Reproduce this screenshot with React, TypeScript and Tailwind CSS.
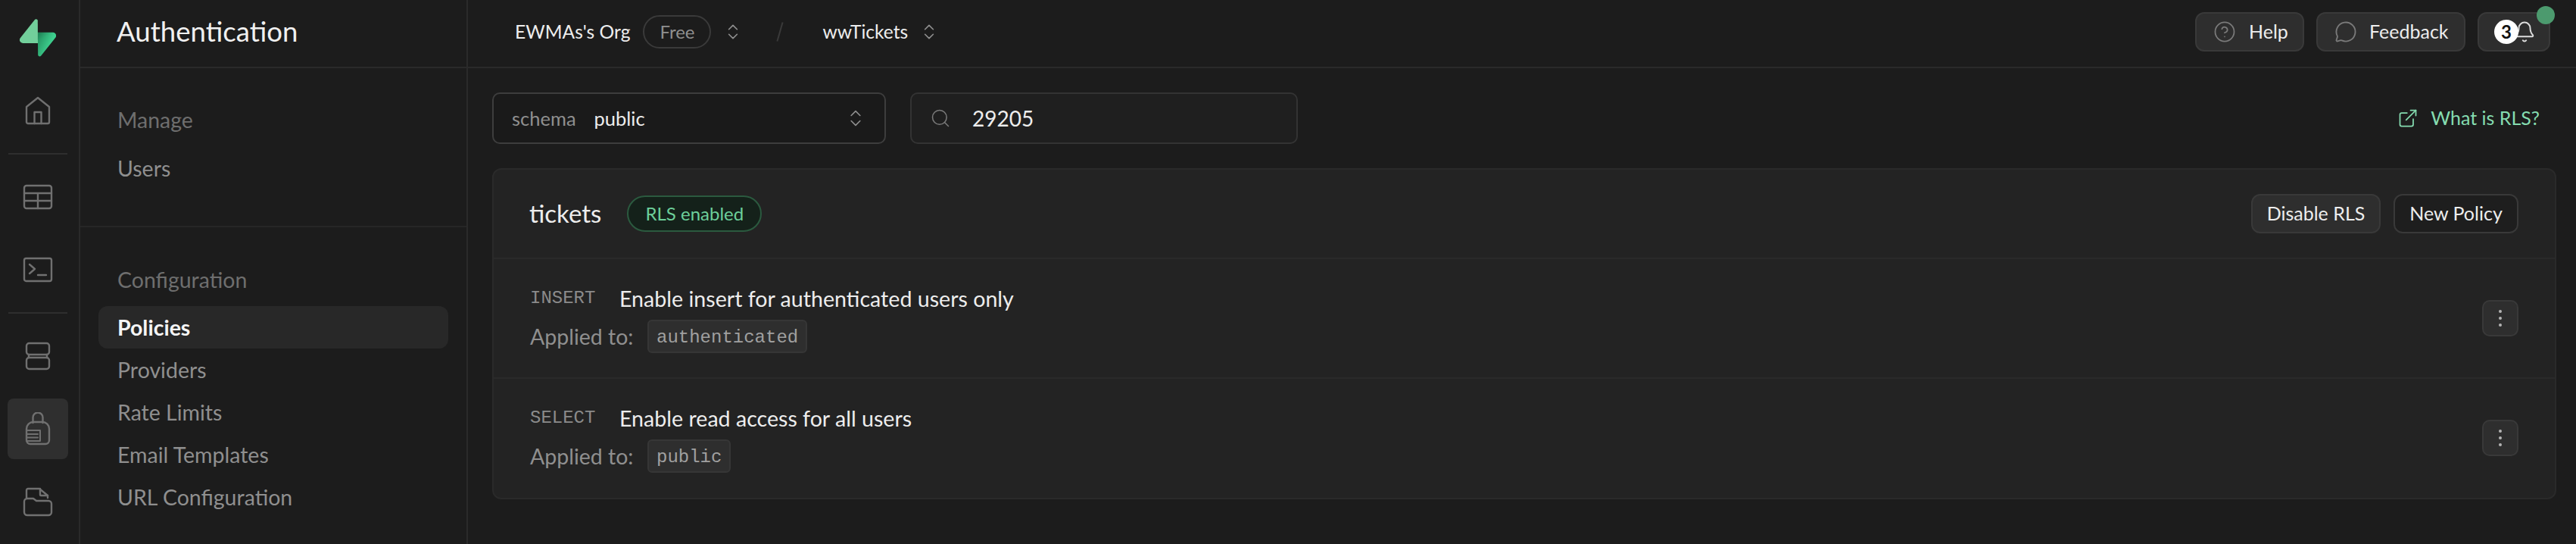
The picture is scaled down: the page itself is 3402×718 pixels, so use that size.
import { Search, ChevronsUpDown, CircleHelp, MessageCircle, Bell, ExternalLink } from 'lucide-react';

function Logo() {
  return (
    <svg width="48" height="50" viewBox="0 0 109 113" fill="none">
      <path d="M63.7 110.3c-2.9 3.6-8.7 1.6-8.8-3L54 40h45.5c8.2 0 12.8 9.5 7.7 16L63.7 110.3Z" fill="url(#g1)" />
      <path d="M63.7 110.3c-2.9 3.6-8.7 1.6-8.8-3L54 40h45.5c8.2 0 12.8 9.5 7.7 16L63.7 110.3Z" fill="url(#g2)" fillOpacity="0.2" />
      <path d="M45.3 2c2.9-3.6 8.7-1.6 8.8 3l.4 67.3H9.7c-8.2 0-12.8-9.5-7.7-16L45.3 2Z" fill="#72cf9b" />
      <defs>
        <linearGradient id="g1" x1="54" y1="55" x2="94" y2="72" gradientUnits="userSpaceOnUse">
          <stop stopColor="#249361" />
          <stop offset="1" stopColor="#3ecf8e" />
        </linearGradient>
        <linearGradient id="g2" x1="36" y1="30" x2="54" y2="65" gradientUnits="userSpaceOnUse">
          <stop />
          <stop offset="1" stopOpacity="0" />
        </linearGradient>
      </defs>
    </svg>
  );
}

const rail = { stroke: '#707070', strokeWidth: 2.4, fill: 'none', strokeLinejoin: 'round' as const, strokeLinecap: 'round' as const };

function RailIcon({ name }: { name: string }) {
  return (
    <svg width="40" height="44" viewBox="0 0 40 44" {...rail}>
      {name === 'home' && (
        <>
          <path d="M5 17 20 5l15 12v20a2 2 0 0 1-2 2H7a2 2 0 0 1-2-2V17Z" />
          <path d="M15.5 39V24h9v15" />
        </>
      )}
      {name === 'table' && (
        <>
          <rect x="2" y="7" width="36" height="30" rx="3" />
          <path d="M2 17h36M2 27h36M20 17v20" />
        </>
      )}
      {name === 'terminal' && (
        <>
          <rect x="2" y="7" width="36" height="30" rx="2.5" />
          <path d="m9 15 7 6-7 6M20 29h11" />
        </>
      )}
      {name === 'db' && (
        <>
          <rect x="5" y="5" width="30" height="15" rx="3.5" />
          <rect x="5" y="24" width="30" height="15" rx="3.5" />
          <path d="M8 20v4M32 20v4" />
        </>
      )}
      {name === 'auth' && (
        <>
          <path d="M13.5 15V8a6.5 6.5 0 0 1 13 0v7" transform="translate(0 -1)" />
          <path d="M5 23a9 9 0 0 1 9-9h12a9 9 0 0 1 9 9v15a5 5 0 0 1-5 5H10a5 5 0 0 1-5-5V23Z" transform="translate(0 -1)" />
          <path d="M5 24h18v14H5M5 29h15M5 33.5h15" strokeWidth="2" />
        </>
      )}
      {name === 'storage' && (
        <>
          <path d="M5 17V7a2 2 0 0 1 2-2h15l11 9v3" />
          <path d="M23 5v8a1 1 0 0 0 1 1h9" />
          <path d="M2 22a4 4 0 0 1 4-4h8l4 3h16a4 4 0 0 1 4 4v11a4 4 0 0 1-4 4H6a4 4 0 0 1-4-4V22Z" />
        </>
      )}
    </svg>
  );
}

function RailItem({ name, active }: { name: string; active?: boolean }) {
  return (
    <div className={`flex h-[80px] w-[80px] items-center justify-center rounded-[8px] ${active ? 'bg-[#2f2f2f]' : ''}`}>
      <RailIcon name={name} />
    </div>
  );
}

function NavItem({ label, active }: { label: string; active?: boolean }) {
  return (
    <div className={`flex h-[56px] items-center rounded-[12px] pl-[25px] text-[28.5px] ${active ? 'bg-[#282828] font-bold text-[#f5f5f5]' : 'text-[#8f8f8f]'}`}>
      {label}
    </div>
  );
}

function HeaderButton({ icon, label, className }: { icon: React.ReactNode; label: string; className: string }) {
  return (
    <div className={`flex h-[52px] items-center rounded-[12px] border-2 border-[#393939] bg-[#2e2e2e] text-[25px] text-[#ededed] ${className}`}>
      {icon}
      {label}
    </div>
  );
}

function PolicyRow({ command, name, role, last }: { command: string; name: string; role: string; last?: boolean }) {
  return (
    <div className={`flex items-center justify-between pl-[48px] pr-[48px] pt-[32px] ${last ? 'pb-[33px]' : 'border-b-2 border-[#2a2a2a] pb-[32px]'}`}>
      <div>
        <div className="flex h-[40px] items-center">
          <span className="w-[118px] font-['Liberation_Mono',monospace] text-[24px] text-[#8b8b8b]">{command}</span>
          <span className="text-[28.6px] text-[#ededed]">{name}</span>
        </div>
        <div className="mt-[8px] flex h-[44px] items-center text-[28.5px] text-[#8f8f8f]">
          <span className="w-[155px]">Applied to:</span>
          <span className="flex h-[44px] items-center rounded-[6px] border-2 border-[#363636] bg-[#2e2e2e] px-[10px] pt-[3px] font-['Liberation_Mono',monospace] text-[24px] text-[#a0a0a0]">
            {role}
          </span>
        </div>
      </div>
      <div className="flex h-[48px] w-[48px] flex-col items-center justify-center gap-[5px] rounded-[10px] border-2 border-[#393939] bg-[#2e2e2e]">
        <span className="h-[4px] w-[4px] rounded-full bg-[#b4b4b4]" />
        <span className="h-[4px] w-[4px] rounded-full bg-[#b4b4b4]" />
        <span className="h-[4px] w-[4px] rounded-full bg-[#b4b4b4]" />
      </div>
    </div>
  );
}

export default function App() {
  return (
    <div className="flex h-[718px] w-[3402px] overflow-hidden bg-[#1c1c1c] font-['Lato',sans-serif] text-[#ededed]">
      {/* icon rail */}
      <aside className="flex w-[106px] shrink-0 flex-col items-center border-r-2 border-[#2a2a2a] pr-[4px]">
        <div className="flex h-[106px] w-full shrink-0 items-start justify-center pt-[25px]">
          <Logo />
        </div>
        <RailItem name="home" />
        <div className="my-[16px] h-[2px] w-[78px] shrink-0 bg-[#2e2e2e]" />
        <div className="flex flex-col gap-[16px]">
          <RailItem name="table" />
          <RailItem name="terminal" />
        </div>
        <div className="my-[16px] h-[2px] w-[78px] shrink-0 bg-[#2e2e2e]" />
        <div className="flex flex-col gap-[16px]">
          <RailItem name="db" />
          <RailItem name="auth" active />
          <RailItem name="storage" />
        </div>
      </aside>

      {/* product sidebar */}
      <aside className="w-[512px] shrink-0 border-r-2 border-[#2a2a2a]">
        <div className="flex h-[90px] items-center border-b-2 border-[#2a2a2a] pb-[6px] pl-[48px] text-[36.6px] text-[#f0f0f0]">Authentication</div>
        <div className="border-b-2 border-[#262626] px-[24px] pb-[48px] pt-[44px]">
          <div className="mb-[12px] flex h-[48px] items-center pl-[25px] text-[28.5px] text-[#6e6e6e]">Manage</div>
          <NavItem label="Users" />
        </div>
        <div className="px-[24px] pt-[45px]">
          <div className="mb-[11px] flex h-[48px] items-center pl-[25px] text-[28.5px] text-[#6e6e6e]">Configuration</div>
          <NavItem label="Policies" active />
          <NavItem label="Providers" />
          <NavItem label="Rate Limits" />
          <NavItem label="Email Templates" />
          <NavItem label="URL Configuration" />
        </div>
      </aside>

      <main className="flex min-w-0 flex-1 flex-col">
        {/* top bar */}
        <header className="flex h-[90px] shrink-0 items-center justify-between border-b-2 border-[#2a2a2a] pb-[4px] pl-[62px] pr-[34px] text-[24.6px]">
          <div className="flex items-center">
            <span className="text-[#ededed]">EWMAs's Org</span>
            <span className="ml-[17px] flex h-[44px] w-[90px] items-center justify-center rounded-full border-2 border-[#3a3a3a] text-[24px] text-[#8f8f8f]">Free</span>
            <ChevronsUpDown size={26} strokeWidth={1.5} className="ml-[16px] text-[#8f8f8f]" />
            <span className="ml-[48px] h-[26px] w-[2px] rotate-[16deg] bg-[#3a3a3a]" />
            <span className="ml-[55px] text-[#ededed]">wwTickets</span>
            <ChevronsUpDown size={26} strokeWidth={1.5} className="ml-[15px] text-[#8f8f8f]" />
          </div>
          <div className="relative flex items-center gap-[16px]">
            <HeaderButton className="w-[144px] pl-[22px]" label="Help" icon={<CircleHelp size={30} strokeWidth={1.4} className="mr-[17px] text-[#7a7a7a]" />} />
            <HeaderButton className="w-[197px] pl-[22px]" label="Feedback" icon={<MessageCircle size={30} strokeWidth={1.5} className="mr-[16px] text-[#7a7a7a]" />} />
            <div className="relative flex h-[52px] w-[96px] items-center rounded-[12px] border-2 border-[#393939] bg-[#2e2e2e]">
              <Bell size={30} strokeWidth={1.6} className="absolute left-[45px] top-[9px] text-[#dcdcdc]" />
              <span className="absolute left-[20px] top-[8px] flex h-[32px] w-[32px] items-center justify-center rounded-full bg-white text-[24px] font-bold text-[#111111]">3</span>
              <span className="absolute right-[-8px] top-[-10px] h-[24px] w-[24px] rounded-full bg-[#4c9a6e]" />
            </div>
          </div>
        </header>

        <div className="flex flex-1 flex-col pl-[32px] pr-[26px] pt-[32px]">
          {/* filters */}
          <div className="flex h-[68px] items-center justify-between pr-[22px]">
            <div className="flex items-center gap-[32px]">
              <div className="flex h-[68px] w-[520px] items-center justify-between rounded-[10px] border-2 border-[#3d3d3d] bg-[#1a1a1a] pl-[24px] pr-[24px] text-[25.5px]">
                <div>
                  <span className="text-[#8f8f8f]">schema</span>
                  <span className="ml-[24px] text-[#ededed]">public</span>
                </div>
                <ChevronsUpDown size={28} strokeWidth={1.4} className="text-[#8f8f8f]" />
              </div>
              <div className="flex h-[68px] w-[512px] items-center rounded-[10px] border-2 border-[#333333] bg-[#1f1f1f] pl-[24px] text-[28px]">
                <Search size={28} strokeWidth={1.3} className="text-[#7a7a7a]" />
                <span className="ml-[28px] text-[#ededed]">29205</span>
              </div>
            </div>
            <div className="flex items-center text-[25px] text-[#85dcb0]">
              <ExternalLink size={28} strokeWidth={1.5} className="mr-[16px]" />
              What is RLS?
            </div>
          </div>

          {/* policies card */}
          <section className="mt-[32px] rounded-[12px] border-2 border-[#2a2a2a] bg-[#232323]">
            <div className="flex h-[118px] items-center justify-between border-b-2 border-[#2a2a2a] pl-[47px] pr-[48px]">
              <div className="flex items-center">
                <span className="text-[33px] text-[#ededed]">tickets</span>
                <span className="ml-[34px] flex h-[48px] w-[178px] items-center justify-center rounded-full border-2 border-[#2b5a3f] bg-[#14211a] text-[24px] text-[#6ccf9a]">RLS enabled</span>
              </div>
              <div className="flex items-center gap-[17px] text-[25px]">
                <div className="flex h-[52px] w-[171px] items-center justify-center rounded-[12px] border-2 border-[#393939] bg-[#2e2e2e] text-[#ededed]">Disable RLS</div>
                <div className="flex h-[52px] w-[165px] items-center justify-center rounded-[12px] border-2 border-[#393939] bg-[#1e1e1e] text-[#ededed]">New Policy</div>
              </div>
            </div>
            <PolicyRow command="INSERT" name="Enable insert for authenticated users only" role="authenticated" />
            <PolicyRow command="SELECT" name="Enable read access for all users" role="public" last />
          </section>
        </div>
      </main>
    </div>
  );
}
